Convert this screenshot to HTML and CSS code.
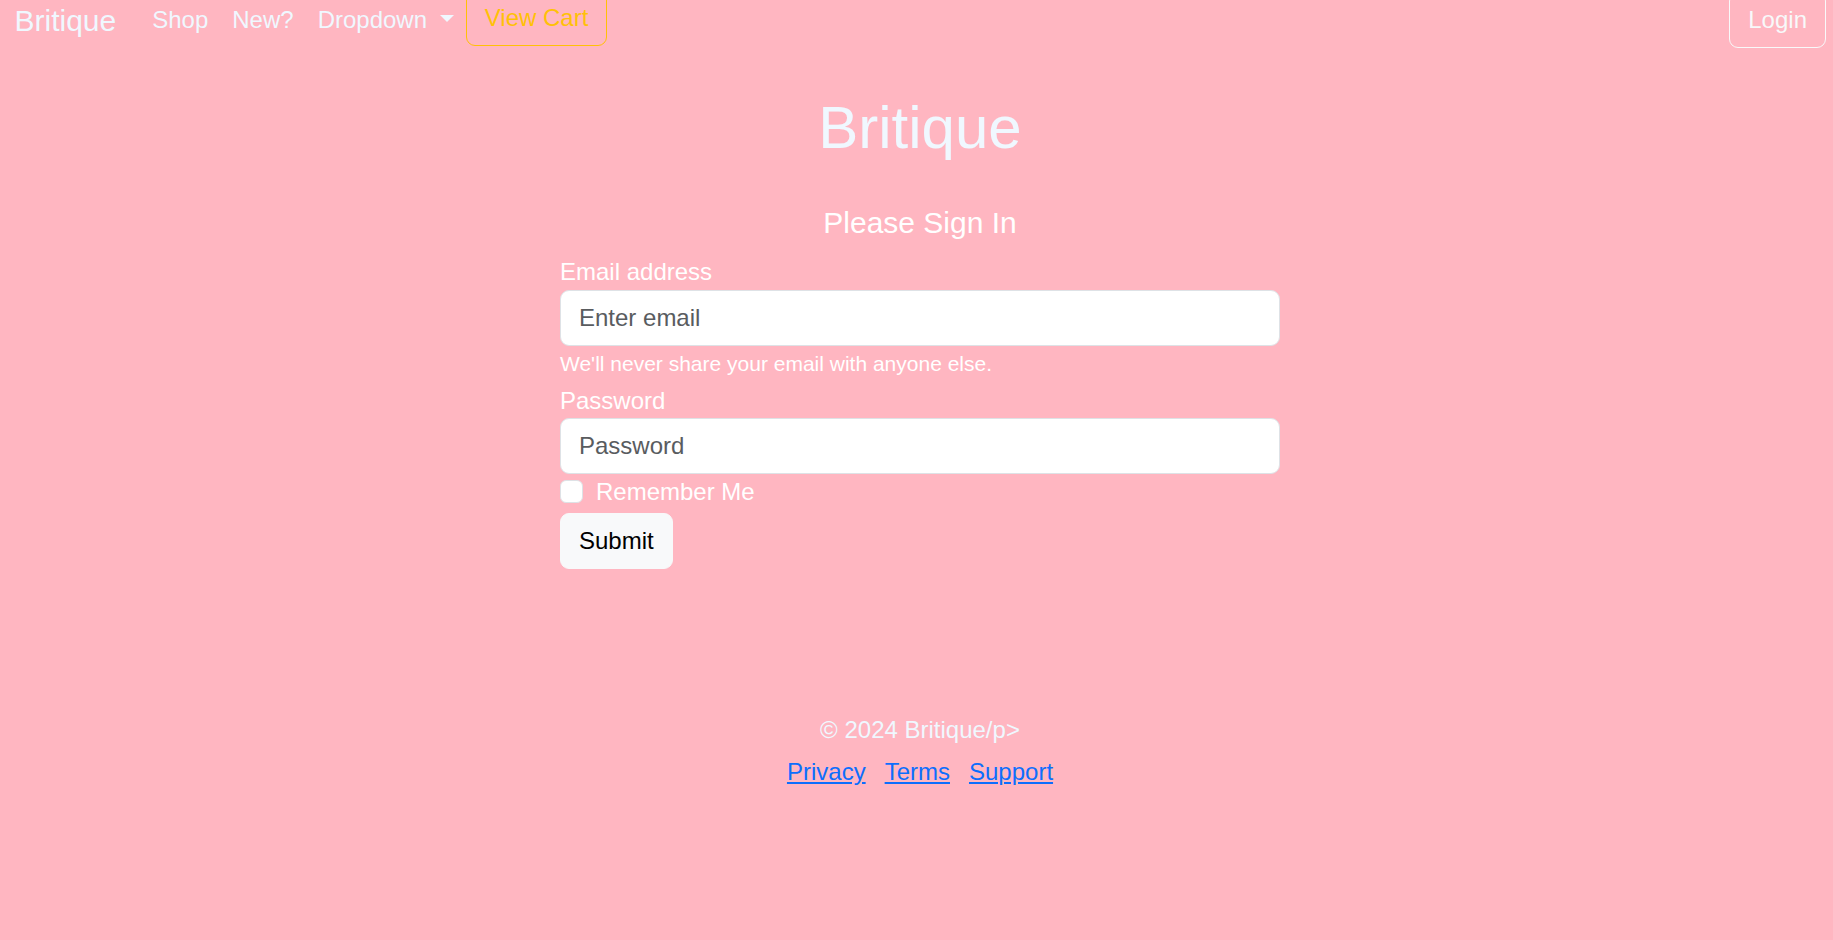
FILE: index.html
```html
<!DOCTYPE html>
<html lang="en">
<head>
<meta charset="utf-8">
<title>Britique - Sign In</title>
<link rel="stylesheet" href="styles.css">
</head>
<body>
<nav class="navbar">
  <a class="brand" href="#">Britique</a>
  <ul class="nav-links">
    <li><a class="nav-link" href="#">Shop</a></li>
    <li><a class="nav-link" href="#">New?</a></li>
    <li><a class="nav-link dropdown-toggle" href="#">Dropdown<span class="caret"></span></a></li>
  </ul>
  <a class="btn btn-cart" href="#">View Cart</a>
  <a class="btn btn-login" href="#">Login</a>
</nav>

<main class="main">
  <div class="column">
    <h1 class="title">Britique</h1>
    <h5 class="subtitle">Please Sign In</h5>
    <form class="form">
      <label class="label" for="email">Email address</label>
      <input class="control" id="email" type="email" placeholder="Enter email">
      <div class="help">We'll never share your email with anyone else.</div>
      <label class="label label-pw" for="pw">Password</label>
      <input class="control" id="pw" type="password" placeholder="Password">
      <div class="check">
        <input class="check-input" id="remember" type="checkbox">
        <label class="check-label" for="remember">Remember Me</label>
      </div>
      <button class="btn-submit" type="button">Submit</button>
    </form>
  </div>
</main>

<footer class="footer">
  <p class="copy">© 2024 Britique/p&gt;</p>
  <div class="footer-links">
    <a href="#">Privacy</a>
    <a href="#">Terms</a>
    <a href="#">Support</a>
  </div>
</footer>
</body>
</html>
```

FILE: styles.css
```css
* {
  box-sizing: border-box;
}

html, body {
  margin: 0;
  padding: 0;
}

body {
  background: #ffb6c1;
  font-family: "Liberation Sans", Arial, sans-serif;
  font-size: 24px;
  line-height: 36px;
  color: #ffffff;
  overflow: hidden;
  height: 940px;
}

/* Navbar */
.navbar {
  display: flex;
  align-items: center;
  height: 40px;
  padding-left: 14.5px;
  padding-right: 7px;
}

.brand {
  font-size: 30px;
  line-height: 45px;
  color: #f0f8ff;
  text-decoration: none;
  margin-right: 24px;
  white-space: nowrap;
}

.nav-links {
  display: flex;
  list-style: none;
  margin: 0;
  padding: 0;
}

.nav-link {
  display: block;
  padding: 0 12px;
  line-height: 36px;
  color: #f0f8ff;
  text-decoration: none;
  white-space: nowrap;
}

.caret {
  display: inline-block;
  margin-left: 12.7px;
  vertical-align: 6px;
  width: 0;
  height: 0;
  border-top: 7px solid #f0f8ff;
  border-left: 7px solid transparent;
  border-right: 7px solid transparent;
}

.btn {
  display: inline-block;
  padding: 9px 18px;
  line-height: 36px;
  border: 1px solid transparent;
  border-radius: 9px;
  text-decoration: none;
  white-space: nowrap;
}

.btn-cart {
  color: #ffc107;
  border-color: #ffc107;
  margin-bottom: 4px;
}

.btn-login {
  margin-left: auto;
  color: #f8f9fa;
  border-color: #f8f9fa;
}

/* Main */
.main {
  padding-left: 7px;
}

.column {
  width: 720px;
  margin: 0 auto;
}

.title {
  margin: 52px 0 0;
  font-size: 60px;
  line-height: 72px;
  font-weight: 400;
  color: #f0f8ff;
  text-align: center;
}

.subtitle {
  margin: 41px 0 0;
  font-size: 30px;
  line-height: 36px;
  font-weight: 400;
  color: #ffffff;
  text-align: center;
}

.form {
  display: flex;
  flex-direction: column;
  align-items: flex-start;
  margin-top: 12.5px;
}

.label {
  display: block;
  color: #ffffff;
  line-height: 36px;
}

.label-pw {
  margin-top: 3.5px;
  line-height: 35px;
}

.control {
  display: block;
  width: 100%;
  height: 56px;
  padding: 9px 18px;
  font-family: inherit;
  font-size: 24px;
  line-height: 36px;
  color: #212529;
  background: #ffffff;
  border: 1px solid #dee2e6;
  border-radius: 9px;
  outline: none;
}

.control::placeholder {
  color: #595c5f;
  opacity: 1;
}

.help {
  margin-top: 2px;
  font-size: 21px;
  line-height: 31.5px;
  color: #ffffff;
}

.check {
  display: flex;
  align-items: flex-start;
  min-height: 36px;
  margin-bottom: 3px;
}

.check-input {
  appearance: none;
  -webkit-appearance: none;
  width: 23px;
  height: 23px;
  margin: 6px 13px 0 0;
  background: #ffffff;
  border: 1px solid #dee2e6;
  border-radius: 6px;
}

.check-label {
  line-height: 36px;
  color: #ffffff;
}

.btn-submit {
  display: inline-block;
  height: 56px;
  padding: 9px 18px;
  font-family: inherit;
  font-size: 24px;
  line-height: 36px;
  color: #000000;
  background: #f8f9fa;
  border: 1px solid #f8f9fa;
  border-radius: 9px;
}

/* Footer */
.footer {
  padding-left: 7px;
  margin-top: 143px;
  text-align: center;
}

.copy {
  margin: 0 0 6px;
  color: #f0f8ff;
  line-height: 36px;
}

.footer-links {
  display: flex;
  justify-content: center;
  gap: 19px;
  line-height: 36px;
}

.footer-links a {
  color: #0d6efd;
  text-decoration: underline;
}
```
